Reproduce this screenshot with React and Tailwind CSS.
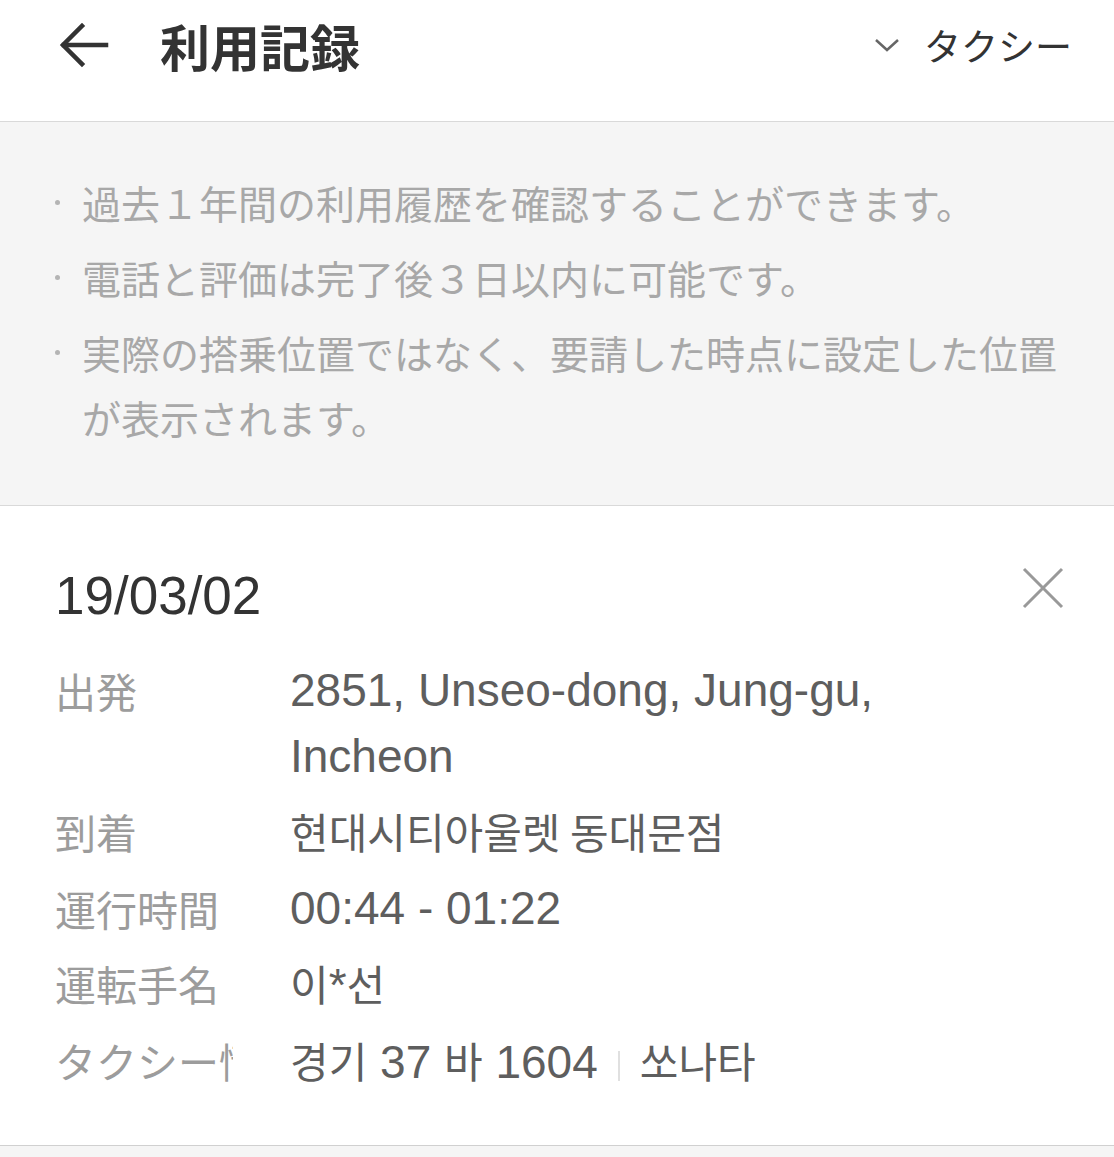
import React from 'react';

const jp = { fontFamily: '"Noto Sans CJK JP", "Noto Sans", sans-serif' };

const notes = [
    ['過去１年間の利用履歴を確認することができます。'],
    ['電話と評価は完了後３日以内に可能です。'],
    ['実際の搭乗位置ではなく、要請した時点に設定した位置', 'が表示されます。'],
];

const Ko = ({ children }) => (
    <span className="text-[42px]" style={{ fontFamily: '"Noto Sans CJK KR", sans-serif' }}>{children}</span>
);

const Row = ({ label, children }) => (
    <div className="flex leading-[66px]">
        <div className="w-[178px] shrink-0 overflow-hidden whitespace-nowrap text-[41px] text-[#9c9c9c]" style={jp}>
            {label}
        </div>
        <div className="ml-[57px] text-[46px] text-[#5e5e5e] whitespace-nowrap" style={{ fontFamily: '"Liberation Sans", "Noto Sans CJK KR", sans-serif' }}>
            {children}
        </div>
    </div>
);

const App = () => {
    return (
        <div className="min-h-[1157px] w-[1114px] bg-[#f5f5f5]">
            {/* Header */}
            <header className="h-[122px] bg-white border-b border-[#d9d9d9] flex items-start justify-between pt-[17px] pl-[58px] pr-[42px]">
                <div className="flex items-center h-[56px]">
                    <svg width="52" height="46" viewBox="0 0 52 46" fill="none" stroke="#333" strokeWidth="4.5" strokeLinecap="square">
                        <path d="M48 23H6" />
                        <path d="M24 4L5 23l19 19" />
                    </svg>
                    <h1 className="ml-[50px] text-[50px] font-bold text-[#333] leading-none" style={jp}>利用記録</h1>
                </div>
                <div className="flex items-center h-[56px]">
                    <svg width="26" height="16" viewBox="0 0 26 16" fill="none" stroke="#666" strokeWidth="2.5">
                        <path d="M2 3l11 10L24 3" />
                    </svg>
                    <span className="ml-[24px] text-[37px] text-[#333] leading-none" style={jp}>タクシー</span>
                </div>
            </header>

            {/* Notes */}
            <section className="pt-[48px] pb-[55px] pl-[55px] border-b border-[#d9d9d9] flex flex-col gap-[10px]">
                {notes.map((lines, i) => (
                    <div key={i} className="flex">
                        <div className="w-[27px] shrink-0 h-[65px] flex items-center">
                            <span className="block w-[5px] h-[5px] rounded-full bg-[#b4b4b4]" />
                        </div>
                        <p className="text-[39px] leading-[65px] text-[#a8a8a8] whitespace-nowrap" style={jp}>
                            {lines.map((l, j) => (
                                <React.Fragment key={j}>
                                    {j > 0 && <br />}
                                    {l}
                                </React.Fragment>
                            ))}
                        </p>
                    </div>
                ))}
            </section>

            {/* Record card */}
            <div className="bg-white border-b border-[#d0d0d0] pt-[60px] pb-[50px] pl-[55px] pr-[50px]">
                <div className="flex justify-between items-start">
                    <span className="text-[53px] leading-[60px] text-[#333]" style={{ fontFamily: '"Liberation Sans", sans-serif' }}>19/03/02</span>
                    <svg width="42" height="42" viewBox="0 0 42 42" stroke="#999" strokeWidth="3" className="mt-[1px]">
                        <path d="M2 2l38 38M40 2L2 40" />
                    </svg>
                </div>
                <div className="mt-[31px] flex flex-col gap-[9px]">
                    <Row label="出発">
                        2851, Unseo-dong, Jung-gu,<br />Incheon
                    </Row>
                    <Row label="到着">
                        <Ko>현대시티아울렛 동대문점</Ko>
                    </Row>
                    <Row label="運行時間">00:44 - 01:22</Row>
                    <Row label="運転手名">
                        <Ko>이</Ko>*<Ko>선</Ko>
                    </Row>
                    <Row label="タクシー情報">
                        <Ko>경기</Ko> 37 <Ko>바</Ko> 1604
                        <span className="inline-block align-middle w-[2px] h-[30px] bg-[#e0e0e0] ml-[20px] mr-[20px]" />
                        <Ko>쏘나타</Ko>
                    </Row>
                </div>
            </div>
        </div>
    );
};

export default App;
